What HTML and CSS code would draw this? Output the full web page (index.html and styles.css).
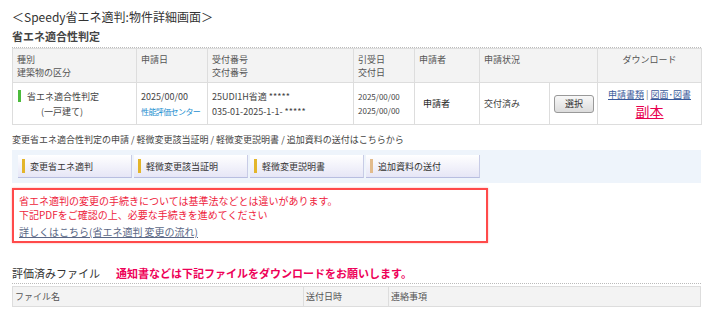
FILE: index.html
```html
<!DOCTYPE html>
<html lang="ja">
<head>
<meta charset="UTF-8">
<meta name="viewport" content="width=device-width, initial-scale=1.0">
<title>Speedy省エネ適判 物件詳細画面</title>
<link rel="stylesheet" href="styles.css">
</head>
<body>
<div class="page">
    <h1 class="page-title">＜Speedy省エネ適判:物件詳細画面＞</h1>

    <h2 class="section-title">省エネ適合性判定</h2>
    <table class="detail-table">
        <colgroup>
            <col style="width:124px">
            <col style="width:71px">
            <col style="width:146px">
            <col style="width:61px">
            <col style="width:65px">
            <col style="width:70px">
            <col style="width:48px">
            <col style="width:104px">
        </colgroup>
        <tr class="head-row">
            <th>種別<br>建築物の区分</th>
            <th>申請日</th>
            <th>受付番号<br>交付番号</th>
            <th>引受日<br>交付日</th>
            <th>申請者</th>
            <th colspan="2">申請状況</th>
            <th class="center">ダウンロード</th>
        </tr>
        <tr class="body-row">
            <td>
                <div class="kind"><span class="kind-bar"></span>省エネ適合性判定</div>
                <div class="kind-sub">(一戸建て)</div>
            </td>
            <td>
                <div>2025/00/00</div>
                <div class="center-name">性能評価センター</div>
            </td>
            <td>
                <div>25UDI1H省適 *****</div>
                <div>035-01-2025-1-1- *****</div>
            </td>
            <td class="small-date">
                <div>2025/00/00</div>
                <div>2025/00/00</div>
            </td>
            <td class="applicant">申請者</td>
            <td>交付済み</td>
            <td><button type="button" class="select-btn">選択</button></td>
            <td class="center">
                <div class="dl-links"><a href="#">申請書類</a> | <a href="#">図面･図書</a></div>
                <div><a href="#" class="copy-link">副本</a></div>
            </td>
        </tr>
    </table>

    <p class="change-note">変更省エネ適合性判定の申請 / 軽微変更該当証明 / 軽微変更説明書 / 追加資料の送付はこちらから</p>
    <div class="action-panel">
        <button type="button" class="action-btn"><span class="bar"></span>変更省エネ適判</button>
        <button type="button" class="action-btn"><span class="bar"></span>軽微変更該当証明</button>
        <button type="button" class="action-btn"><span class="bar"></span>軽微変更説明書</button>
        <button type="button" class="action-btn"><span class="bar bar-tan"></span>追加資料の送付</button>
    </div>

    <div class="notice">
        <p>省エネ適判の変更の手続きについては基準法などとは違いがあります。</p>
        <p>下記PDFをご確認の上、必要な手続きを進めてください</p>
        <a href="#" class="notice-link">詳しくはこちら(省エネ適判 変更の流れ)</a>
    </div>

    <h2 class="section-title files-title">評価済みファイル<span class="files-note">通知書などは下記ファイルをダウンロードをお願いします。</span></h2>
    <table class="files-table">
        <colgroup>
            <col style="width:291px">
            <col style="width:85px">
            <col>
        </colgroup>
        <tr>
            <th>ファイル名</th>
            <th>送付日時</th>
            <th>連絡事項</th>
        </tr>
    </table>
</div>
</body>
</html>
```

FILE: styles.css
```css
body {
    margin: 0;
    padding: 0;
    background-color: #fff;
    color: #333;
    font-family: "Noto Sans CJK JP", "Noto Sans", sans-serif;
}

.page {
    width: 689px;
    padding: 8px 0 0 12px;
}

.page-title {
    margin: 0;
    font-size: 12px;
    line-height: 18px;
    font-weight: normal;
    color: #333;
}

.section-title {
    margin: 2px 0 0;
    padding-bottom: 3px;
    font-size: 11px;
    line-height: 16px;
    font-weight: bold;
    color: #444;
    border-bottom: 1px dotted #bbb;
}

.detail-table,
.files-table {
    width: 689px;
    table-layout: fixed;
    border-collapse: collapse;
    font-size: 9px;
}

.detail-table th,
.detail-table td,
.files-table th {
    border: 1px solid #ddd;
    text-align: left;
    font-weight: normal;
    color: #555;
    padding: 0 4px;
}

.detail-table th {
    background-color: #f3f3f3;
    height: 29px;
    line-height: 13px;
    vertical-align: top;
    padding-top: 4px;
}

.detail-table td {
    height: 42px;
    line-height: 15px;
    vertical-align: middle;
    color: #444;
}

.detail-table .body-row td {
    height: 41px;
}

.detail-table .center {
    text-align: center;
}

.kind {
    display: flex;
    align-items: center;
    padding-left: 1px;
}

.kind-bar {
    display: inline-block;
    width: 3px;
    height: 12px;
    margin-right: 6px;
    background-color: #4cbb3c;
}

.kind-sub {
    padding-left: 24px;
}

.center-name {
    color: #1e8fd0;
    font-size: 8px;
    letter-spacing: -0.6px;
    white-space: nowrap;
}

.small-date {
    font-size: 8px;
    line-height: 14px !important;
}

.applicant {
    font-weight: bold;
    color: #222 !important;
    padding-left: 8px !important;
}

.select-btn {
    width: 40px;
    height: 18px;
    padding: 0;
    font-family: inherit;
    font-size: 9px;
    color: #333;
    background: linear-gradient(#f8f8f8, #dcdcdc);
    border: 1px solid #999;
    border-radius: 3px;
}

.dl-links {
    font-size: 9px;
    color: #777;
}

.dl-links a {
    color: #3a5a9a;
}

.copy-link {
    font-size: 14px;
    line-height: 18px;
    color: #e8004f;
}

.change-note {
    margin: 8px 0 0;
    font-size: 9px;
    line-height: 14px;
    color: #444;
}

.action-panel {
    display: flex;
    gap: 2px;
    margin-top: 3px;
    padding: 5px 6px;
    background-color: #eef4fb;
}

.action-btn {
    display: flex;
    align-items: center;
    width: 114px;
    height: 23px;
    padding: 0 0 0 4px;
    font-family: inherit;
    font-size: 9px;
    color: #333;
    text-align: left;
    background: linear-gradient(#ffffff, #e6e6f6);
    border: none;
    border-right: 1px solid #c8cce6;
    border-bottom: 1px solid #b8bee0;
}

.action-btn .bar {
    display: inline-block;
    width: 3px;
    height: 14px;
    margin-right: 5px;
    background-color: #e3b52a;
}

.action-btn .bar-tan {
    background-color: #e2bb8c;
}

.notice {
    width: 467px;
    margin-top: 5px;
    padding: 4px 0 2px 5px;
    border: 2px solid #ff4a4a;
    box-shadow: 0 0 2px #ffb0b0;
    font-size: 10px;
    line-height: 14px;
    color: #ee1c3c;
}

.notice p {
    margin: 0;
}

.notice-link {
    display: inline-block;
    margin-top: 3px;
    color: #5a6785;
}

.files-title {
    margin-top: 22px;
    font-weight: normal;
    font-size: 11px;
    color: #333;
    padding-bottom: 2px;
}

.files-note {
    margin-left: 16px;
    font-weight: bold;
    color: #ee0058;
}

.files-table {
    margin-top: 2px;
}

.files-table th {
    height: 19px;
    background-color: #f3f3f3;
    padding: 0 2px;
}
```
